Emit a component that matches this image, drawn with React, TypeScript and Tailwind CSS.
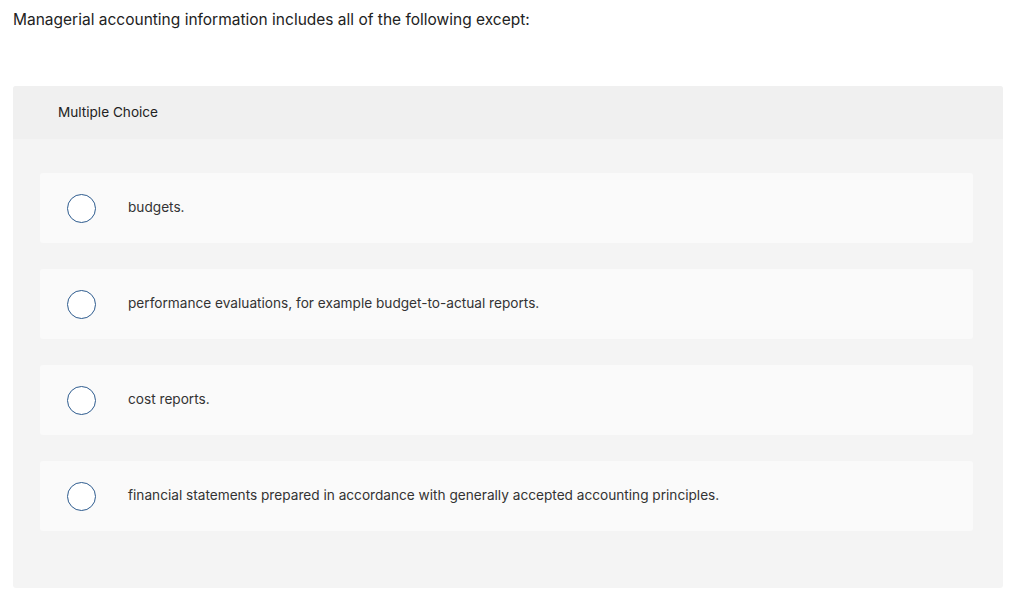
const options = [
  "budgets.",
  "performance evaluations, for example budget-to-actual reports.",
  "cost reports.",
  "financial statements prepared in accordance with generally accepted accounting principles.",
];

export default function App() {
  return (
    <div className="min-h-[616px] w-[1024px] bg-white text-[#333] font-['Inter','Liberation_Sans',sans-serif]">
      {/* Question */}
      <p className="px-[13px] pt-[8px] text-[15.5px] leading-[24px] text-[#222]">
        Managerial accounting information includes all of the following except:
      </p>

      {/* Choices panel */}
      <div className="mx-[13px] mt-[54px] w-[990px] rounded-[3px] bg-[#f4f4f4]">
        <div className="flex h-[53px] items-center rounded-t-[3px] bg-[#f0f0f0] pl-[45px] text-[13.6px] text-[#222]">
          Multiple Choice
        </div>
        <div className="flex flex-col gap-[26px] pl-[27px] pr-[30px] pt-[34px] pb-[57px]">
          {options.map((opt) => (
            <label
              key={opt}
              className="flex h-[70px] items-center rounded-[3px] bg-[#fafafa] pl-[27px]"
            >
              <span className="h-[29px] w-[29px] shrink-0 rounded-full border-[1.5px] border-[#2d5b8e] bg-white" />
              <span className="ml-[32px] pb-[2px] text-[13.65px] text-[#333]">{opt}</span>
            </label>
          ))}
        </div>
      </div>
    </div>
  );
}
